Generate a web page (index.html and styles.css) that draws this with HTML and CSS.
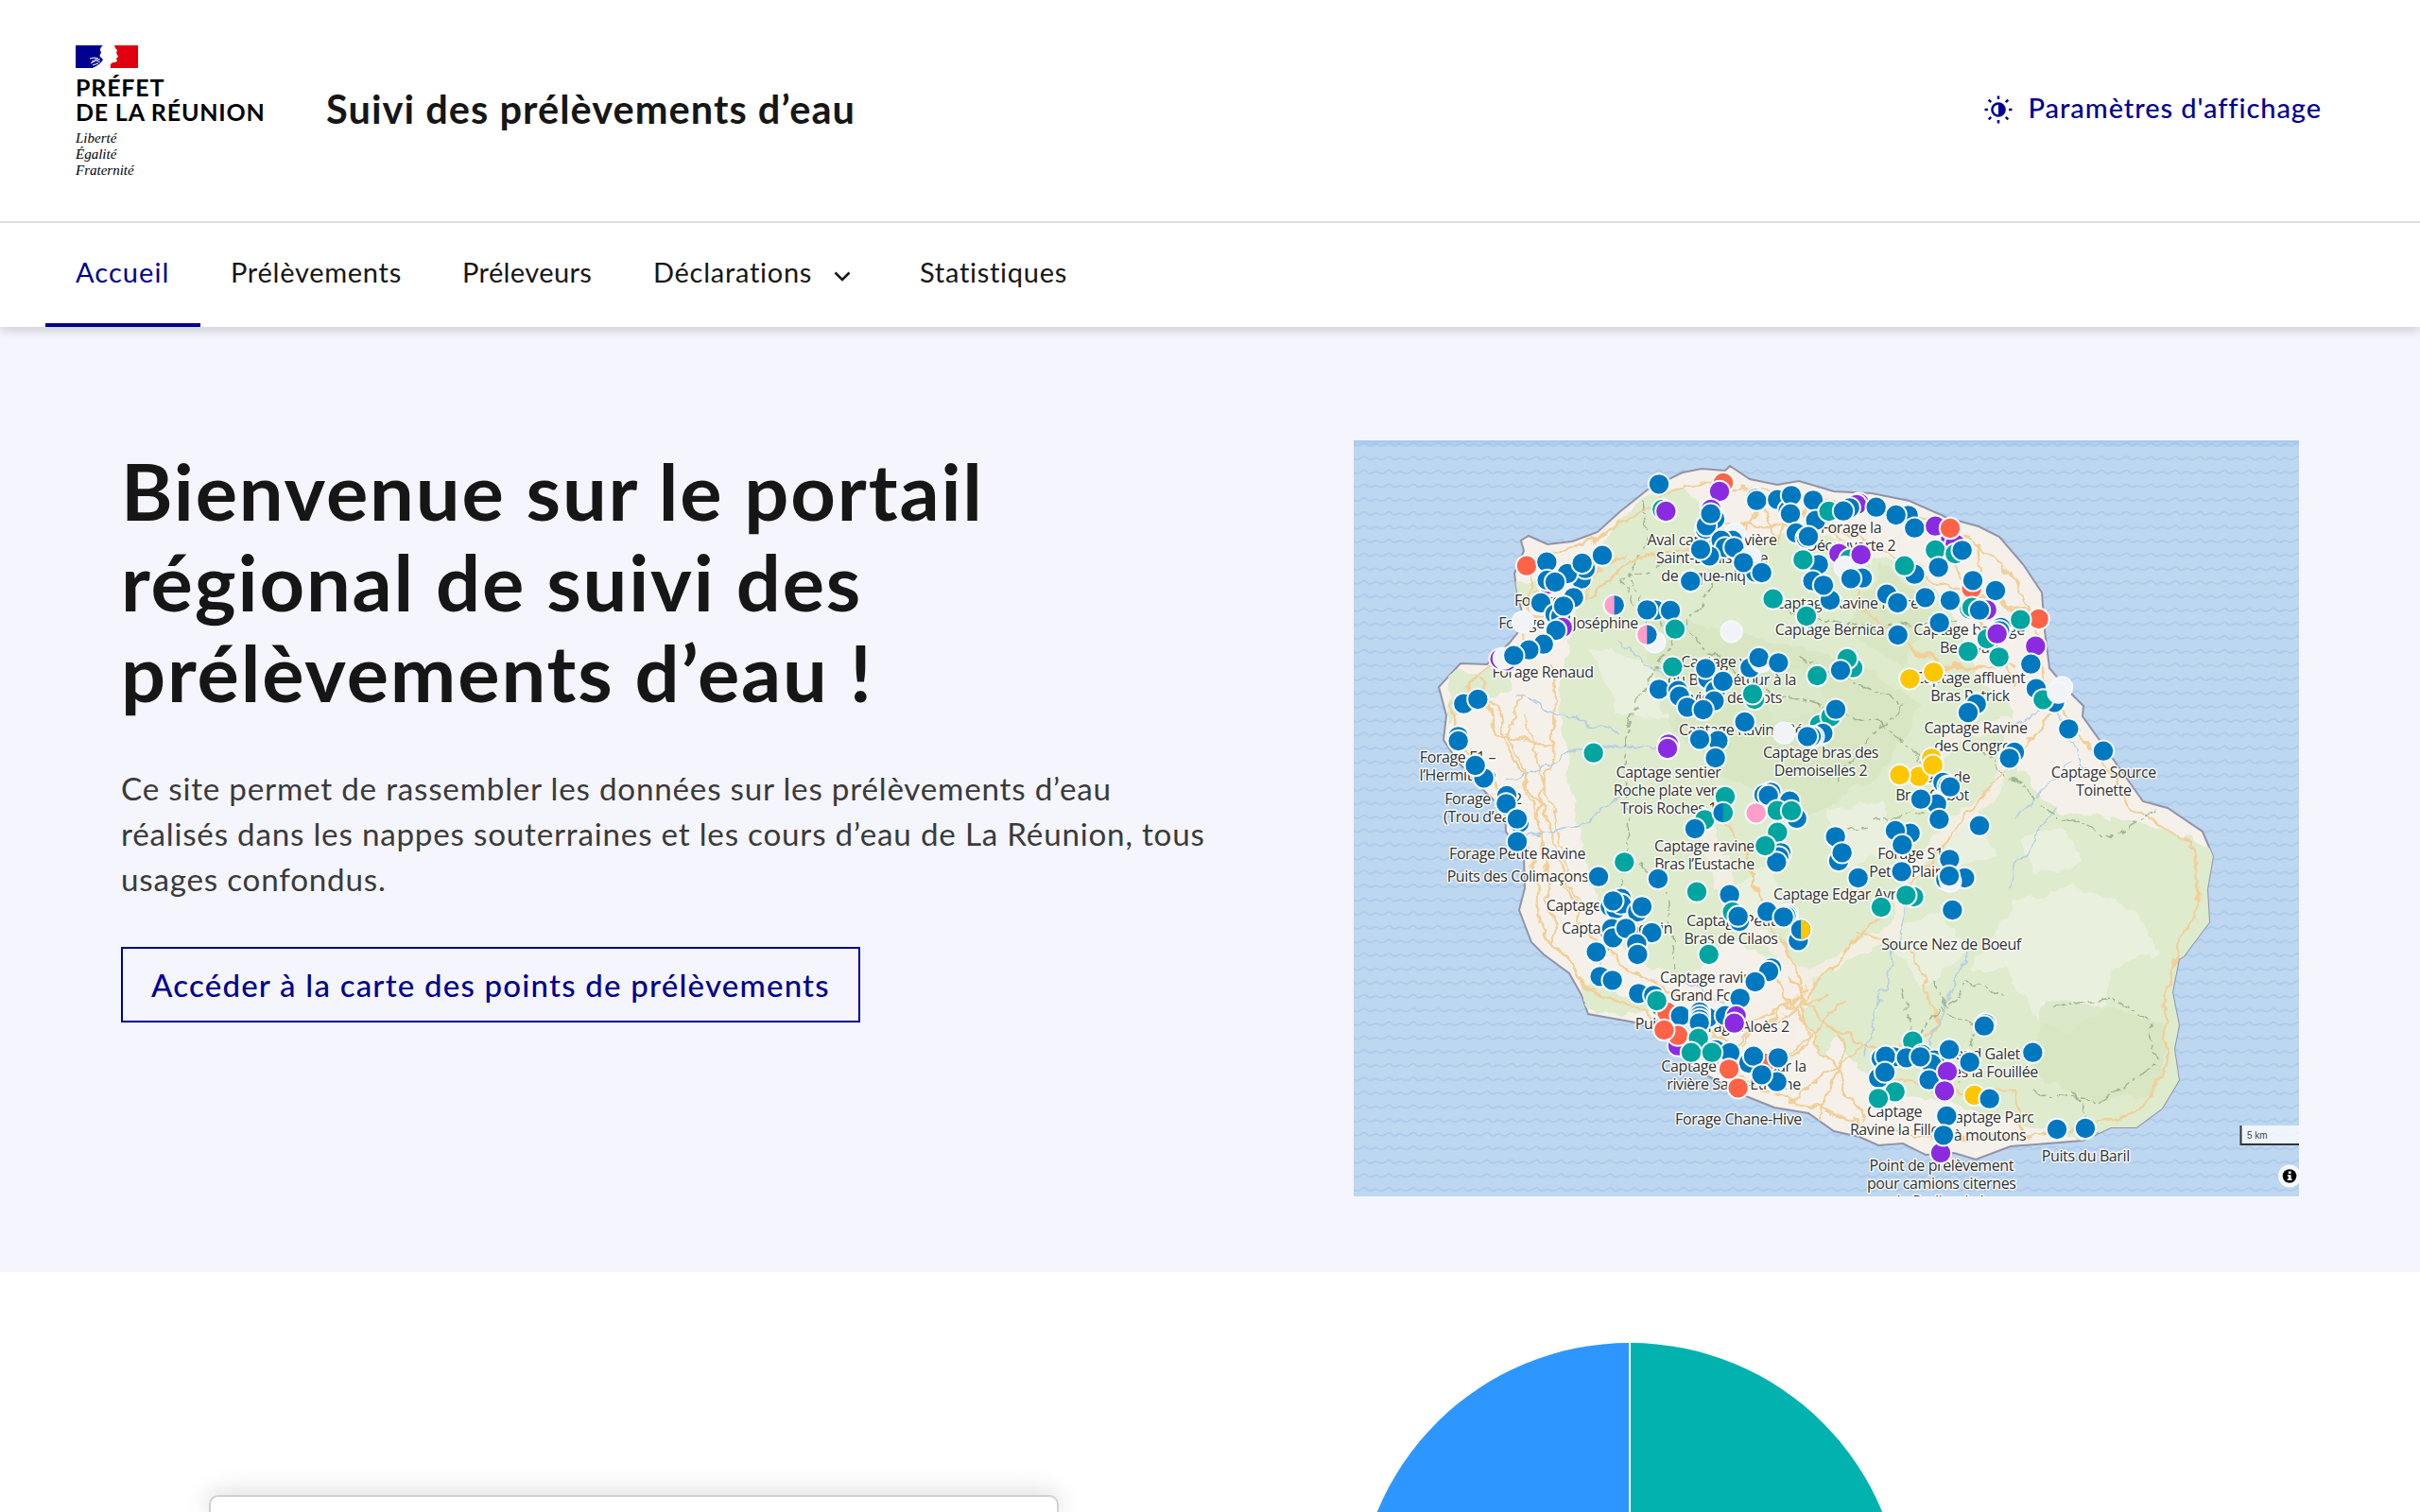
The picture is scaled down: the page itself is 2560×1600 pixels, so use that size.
FILE: index.html
```html
<!DOCTYPE html>
<html lang="fr">
<head>
<meta charset="utf-8">
<title>Suivi des prélèvements d’eau</title>
<link rel="stylesheet" href="styles.css">
</head>
<body>
<header class="header">
  <div class="header-top">
    <div class="logo">
      <svg class="flag" viewBox="0 0 66 24">
        <rect width="66" height="24" fill="#fff"/>
        <path d="M0 0H29C27 1 26 3 26 5L27 8C25 10 25 12 27 13L29 15L27 18C24 21 21 22 18 24H0Z" fill="#000091"/>
        <path d="M41 0H66V24H37C36 20 38 18 41 18L44 17L43 14L45 12L43 8L44 5L42 3Z" fill="#e1000f"/>
        <path d="M15 14L20 13L24 14M17 17L22 16L26 18M16 19L20 17M18 21L24 19M20 15L26 15" fill="none" stroke="#fff" stroke-width="1"/>
      </svg>
      <div class="logo-name">PRÉFET<br>DE LA RÉUNION</div>
      <div class="logo-motto">Liberté<br>Égalité<br>Fraternité</div>
    </div>
    <div class="site-title">Suivi des prélèvements d’eau</div>
    <a class="display-link">
      <svg class="display-icon" viewBox="0 0 30 30" fill="none" stroke="#000091">
        <circle cx="15" cy="15" r="6.6" stroke-width="2.5"/>
        <path d="M15 8.5a6.5 6.5 0 0 1 0 13Z" fill="#000091" stroke="none"/>
        <path d="M15 .5V4M15 26V29.500M.5 15H4M26 15H29.500M4.700 4.700L7.200 7.200M22.800 22.800L25.300 25.300M4.700 25.300L7.200 22.800M22.800 7.200L25.300 4.700" stroke-width="2.500"/>
      </svg>
      <span>Paramètres d'affichage</span>
    </a>
  </div>
  <nav class="nav">
    <a class="nav-item active">Accueil</a>
    <a class="nav-item">Prélèvements</a>
    <a class="nav-item tight">Préleveurs</a>
    <a class="nav-item">Déclarations
      <svg class="chevron" viewBox="0 0 18 11"><path d="M1.500 1.500L9 9L16.500 1.500" fill="none" stroke="#161616" stroke-width="2.600"/></svg>
    </a>
    <a class="nav-item">Statistiques</a>
  </nav>
</header>
<main>
  <section class="hero">
    <div class="intro">
      <h1>Bienvenue sur le portail régional de suivi des prélèvements d’eau !</h1>
      <p>Ce site permet de rassembler les données sur les prélèvements d’eau réalisés dans les nappes souterraines et les cours d’eau de La Réunion, tous usages confondus.</p>
      <a class="button">Accéder à la carte des points de prélèvements</a>
    </div>
    <svg class="map" viewBox="0 0 1000 800">
      <defs>
        <pattern id="waves" width="26" height="14.600" patternUnits="userSpaceOnUse">
          <rect width="26" height="14.600" fill="#bdd7f1"/>
          <path d="M0 5Q4 7 8 4T14 4T20 5T26 5" fill="none" stroke="#abcae9" stroke-width="1.700"/>
        </pattern>
        <filter id="rough" x="0" y="0" width="1000" height="800" filterUnits="userSpaceOnUse">
          <feTurbulence type="fractalNoise" baseFrequency=".05" numOctaves="3" seed="4"/>
          <feDisplacementMap in="SourceGraphic" scale="16" xChannelSelector="R" yChannelSelector="G"/>
        </filter>
        <linearGradient id="edge" x2="0" y2="1"><stop stop-color="#9ec1e6" stop-opacity=".7"/><stop offset="1" stop-color="#9ec1e6" stop-opacity="0"/></linearGradient>
        <path id="island" d="M348 34L368 30L393 32L398 27L419 41L448 47L471 43L508 54L548 56L588 64L628 82L661 91L683 102L708 131L728 161L731 201L736 241L758 267L772 281L771 292L801 334L835 382L861 389L898 414L909 440L903 475L905 510L878 546L873 549L866 584L873 619L868 644L873 677L855 707L828 727L801 727L771 741L735 744L695 747L658 761L635 754L605 756L581 744L555 746L535 737L508 731L481 712L445 706L415 694L381 676L355 661L328 627L298 616L248 607L241 587L228 564L201 544L188 531L175 497L181 474L180 441L161 414L160 391L141 374L111 341L95 317L98 291L90 261L113 236L141 237L165 214L181 194L173 161L170 141L180 117L177 106L185 101L205 110L231 107L258 97L281 76L311 52Z"/>
        <clipPath id="land"><use href="#island"/></clipPath>
      </defs>
      <rect width="1000" height="800" fill="url(#waves)"/>
      <rect width="1000" height="8" fill="url(#edge)"/>
      <use href="#island" fill="#f5f1ea" stroke="#9293a8" stroke-width="2"/>
      <g clip-path="url(#land)">
        <g filter="url(#rough)">
          <path d="M250 130L300 60L350 45L370 80L420 110L480 90L540 125L600 130L640 200L660 250L700 290L705 350L740 390L800 400L860 410L930 440L920 520L880 560L890 700L860 750L800 750L700 720L620 700L560 690L500 620L470 560L400 530L350 570L320 560L280 530L250 460L235 400L225 320L215 270L230 200Z" fill="#deebcd"/>
          <path d="M100 245L140 245L170 225L165 260L130 280L100 300ZM240 570L290 590L330 600L290 610L245 600ZM170 148L200 150L195 175L175 172ZM490 530L530 560L520 620L500 650L470 600ZM340 610L380 600L385 650L350 645Z" fill="#deebcd"/>
          <path d="M650 560L700 490L760 470L830 500L850 540L800 560L790 610L750 625L710 600L690 560ZM420 260L470 240L500 280L450 300ZM250 220L330 240L340 300L280 290ZM560 520L620 500L650 540L600 580ZM500 390L560 380L570 440L510 450ZM700 420L750 410L770 450L720 460ZM620 400L660 390L680 440L640 450ZM400 470L440 450L460 500L420 520Z" fill="#eaf0de"/>
          <path d="M300 180L390 200L520 230L600 280L560 350L480 400L400 360L330 300ZM560 130L610 180L580 240L520 200ZM730 590L800 600L860 620L850 690L780 700L720 670Z" fill="#d4e4be" opacity=".65"/>
          <path d="M390 440L400 500L440 530L480 580L450 650M370 400L390 470M600 350L640 310L700 300L680 370L600 440L570 520L490 560L430 600L340 640" fill="none" stroke="#f6efe6" stroke-width="14" opacity=".8"/>
          <g fill="none" stroke="#f2cf98" stroke-width="2.600">
            <path d="M350 44L420 52L500 66L590 78L650 105L700 145L722 200L730 260L770 310L820 385L885 425L895 480L870 540L858 590L860 660L835 705L770 730L690 738L610 738L530 722L470 700L400 672L350 630L300 600L255 590L230 555L195 510L190 440L165 380L115 325L102 280L130 250L180 215L185 170L190 125L250 108L300 78Z"/>
            <path d="M120 260L150 280L170 340L200 390L220 450L240 510L290 560L350 590M210 240L212 320L195 390L205 470L215 540L260 590M135 250L150 310L210 325M180 190L230 180L290 130L360 110L420 90L500 90L560 115L620 150L700 180M350 610L400 640L470 600L520 540L600 460L670 370L740 290M500 70L540 180L620 240L700 240M500 620L560 650L620 620L590 540L530 520M560 670L620 690L700 690L710 740M420 680L480 640L470 560L440 510L415 440L390 390M490 720L520 640L460 570M270 120L240 170L205 210M380 60L410 110L430 60L450 110L470 60L490 100M660 110L665 165L725 185M620 90L655 180L700 260M350 660L420 610L500 590M440 560L500 650L540 720"/>
            <path d="M410 640L480 580M430 680L520 590M460 700L540 640M190 160L290 120M180 290L240 500M175 270L165 310L195 400" stroke-width="2"/>
          </g>
          <path d="M170 270L280 310M160 360L260 320L340 330M180 420L240 410L290 370M330 560L400 600M700 300L740 280L780 360M700 400L760 340M690 470L740 390M540 650L590 480M280 210L350 270M610 640L650 540" fill="none" stroke="#b4cde4" stroke-width="1.500"/>
          <path d="M306 60L310 100L290 150L340 210L300 270L288 330L290 440L330 470L340 560M290 440L260 560M380 150L350 200L420 260L560 300L620 360M460 180L550 200L640 190M470 230L580 280L510 360M330 130L280 150L320 210M640 310L690 350L730 390L800 420L850 390M580 580L590 640L620 600L660 620L640 680M610 570L630 600L650 570L690 590M740 600L800 590L840 610L850 660L790 700L720 690M760 690L790 740M500 420L560 400L620 390" fill="none" stroke="#9db38c" stroke-width="1.500" stroke-dasharray="12 4 4 4"/>
        </g>
      </g>
      <g class="labels" id="labels"></g>
      <g class="points" id="points"></g>
      <g class="scale">
        <rect x="938.500" y="725" width="62" height="20" fill="#fff" fill-opacity=".75"/>
        <path d="M938.500 725V745H1000" fill="none" stroke="#333" stroke-width="2"/>
        <text x="945" y="738.500">5 km</text>
      </g>
      <circle cx="990" cy="778.500" r="12" fill="#fff" fill-opacity=".85"/>
      <circle cx="990" cy="778.500" r="7.300" fill="#000"/>
      <path d="M988.800 773.500h2.800v2.500h-2.800zM987.800 777.200h3.800v4.300h1v1.600h-5v-1.600h1.200v-2.700h-1z" fill="#fff"/>
    </svg>
  </section>
  <section class="stats">
    <div class="card"></div>
    <svg class="pie" viewBox="0 0 578 179">
      <path d="M289 0A289 289 0 0 0 289 578Z" fill="#2e96ff"/>
      <path d="M289 0A289 289 0 0 1 289 578Z" fill="#02b2af"/>
      <path d="M289 0V289" stroke="#fff" stroke-width="2"/>
    </svg>
  </section>
</main>
<script src="map.js"></script>
</body>
</html>
```
FILE: styles.css
```css
* { box-sizing: border-box; }
body {
  margin: 0;
  background: #fff;
  color: #161616;
  font-family: Lato, "Open Sans", sans-serif;
}
.header {
  position: relative;
  height: 346px;
  background: #fff;
  box-shadow: 0 4px 10px rgba(0, 0, 18, .16);
}
.header-top {
  display: flex;
  height: 236px;
  padding: 48px 104px 0 80px;
  border-bottom: 2px solid #ddd;
}
.logo { width: 265px; }
.flag { display: block; width: 66px; height: 24px; }
.logo-name {
  margin-top: 8px;
  color: #000;
  font-size: 25px;
  font-weight: 700;
  line-height: 25.800px;
  letter-spacing: .8px;
  white-space: nowrap;
}
.logo-motto {
  margin-top: 6px;
  color: #000;
  font: italic 15px/17px "Liberation Serif", serif;
}
.site-title {
  margin-top: 39px;
  font-size: 41.500px;
  font-weight: 700;
  line-height: 56px;
  letter-spacing: 1.050px;
  white-space: nowrap;
}
.display-link {
  display: flex;
  gap: 17px;
  height: 48px;
  margin: 44px 0 0 auto;
  color: #000091;
  font-size: 29px;
  font-weight: 500;
  line-height: 44px;
  letter-spacing: .930px;
  white-space: nowrap;
}
.display-icon { width: 30px; height: 30px; margin-top: 9px; }
.nav {
  display: grid;
  grid-template-columns: 164px 245px 202px 282px 222px;
  height: 110px;
  padding-left: 48px;
}
.nav-item {
  padding: 28px 0 0 32px;
  font-size: 29px;
  line-height: 48px;
  letter-spacing: .730px;
  white-space: nowrap;
}
.nav-item.tight { letter-spacing: .4px; }
.nav-item.active { border-bottom: 4px solid #000091; color: #000091; letter-spacing: 1.050px; }
.chevron { width: 18px; height: 11px; margin-left: 15px; vertical-align: 1px; }
.hero {
  display: grid;
  grid-template-columns: 1160px 1000px;
  justify-content: space-between;
  height: 1000px;
  padding: 120px 128px 80px;
  background: #f5f5fe;
}
h1 {
  margin: 5px 0 51px;
  font-size: 83px;
  font-weight: 700;
  line-height: 96px;
  letter-spacing: 1.850px;
  width: 1040px;
}
.intro p {
  margin: 0 0 48px;
  color: #3a3a3a;
  font-size: 33.200px;
  line-height: 48px;
  letter-spacing: .790px;
}
.button {
  display: inline-block;
  height: 80px;
  padding: 14px 30px;
  border: 2px solid #000091;
  color: #000091;
  font-size: 33px;
  font-weight: 500;
  line-height: 48px;
  letter-spacing: 1.220px;
  white-space: nowrap;
}
.map { display: block; width: 1000px; height: 800px; }
.labels {
  fill: #333;
  stroke: #fff;
  stroke-width: 3px;
  stroke-linejoin: round;
  stroke-opacity: .85;
  paint-order: stroke;
  font: 16px "Open Sans", "Noto Sans", sans-serif;
  letter-spacing: -.4px;
}
.points { stroke: #f3f8fc; stroke-width: 2px; }
.scale text { fill: #444; font: 10px "Liberation Sans", sans-serif; }
.stats {
  display: grid;
  grid-template-columns: 899px 578px;
  column-gap: 315px;
  height: 254px;
  padding: 75px 221px 0;
  overflow: hidden;
}
.card {
  height: 18px;
  margin-top: 161px;
  border: 2px solid #d0d0d0;
  border-bottom: 0;
  border-radius: 10px 10px 0 0;
  background: #fff;
  box-shadow: 0 0 28px rgba(0, 0, 0, .2);
}
.pie { display: block; width: 578px; height: 179px; }
```
FILE: map.js
```js
const NS = 'http://www.w3.org/2000/svg';
const COLORS = { b: '#0078bf', t: '#00a5a0', p: '#8a2be2', o: '#ff6347', y: '#fdc700', w: '#f2f3f7', k: '#ff9ec8' };

function add(parent, tag, attrs, text) {
  const el = document.createElementNS(NS, tag);
  for (const k in attrs) el.setAttribute(k, attrs[k]);
  if (text) el.textContent = text;
  parent.append(el);
  return el;
}

// [anchor, x, first baseline, lines...]
const LABELS = [
  ['middle', 200, 250.7, 'Forage Renaud'],
  ['start', 170, 175, 'Forage'],
  ['middle', 227, 199, 'Forage Ste Joséphine'],
  ['middle', 379, 110.7, 'Aval captage rivière', 'Saint-Denis zone', 'de pique-nique'],
  ['middle', 526, 97.7, 'Forage la', 'Découverte 2'],
  ['middle', 521.5, 178, 'Captage Ravine Noire'],
  ['middle', 503.5, 206, 'Captage Bernica'],
  ['middle', 651, 206, 'Captage barrage', 'Beauvan'],
  ['middle', 400, 240, 'Captage vers le', 'du Bras Détour à la', 'rivière des cots'],
  ['middle', 652, 256.7, 'Captage affluent', 'Bras Patrick'],
  ['middle', 658, 309.7, 'Captage Ravine', 'des Congres'],
  ['middle', 793.3, 356.5, 'Captage Source', 'Toinette'],
  ['middle', 110, 340.7, 'Forage F1 –', 'l’Hermitage'],
  ['middle', 137, 384.7, 'Forage F5 2', '(Trou d’eau)'],
  ['middle', 173, 443.3, 'Forage Petite Ravine'],
  ['middle', 173.5, 467.3, 'Puits des Colimaçons'],
  ['start', 203.7, 498, 'Captage'],
  ['start', 220, 522.3, 'Captage Chemin'],
  ['middle', 333, 357, 'Captage sentier', 'Roche plate vers', 'Trois Roches 1'],
  ['start', 344, 311.7, 'Captage Ravine Bémal'],
  ['middle', 494, 335.7, 'Captage bras des', 'Demoiselles 2'],
  ['middle', 371, 435.3, 'Captage ravine', 'Bras l’Eustache'],
  ['middle', 612, 361.7, 'Captage de', 'Bras Cabot'],
  ['middle', 589, 443, 'Forage S1', 'Petite Plaine'],
  ['start', 444, 486, 'Captage Edgar Avril'],
  ['middle', 399, 513.7, 'Captage Petit', 'Bras de Cilaos'],
  ['middle', 632, 538.7, 'Source Nez de Boeuf'],
  ['middle', 377, 574, 'Captage ravine', 'Grand Fond'],
  ['start', 297.7, 623, 'Puits'],
  ['end', 460.7, 625.7, 'Forage Aloès 2'],
  ['middle', 402, 668.3, 'Captage mobile sur la', 'rivière Saint-Étienne'],
  ['middle', 407, 724.3, 'Forage Chane-Hive'],
  ['middle', 662, 655.3, 'Grand Galet', 'Chutes la Fouillée'],
  ['middle', 572, 716.3, 'Captage', 'Ravine la Fille'],
  ['middle', 673, 722.3, 'Captage Parc', 'à moutons'],
  ['middle', 774.3, 763, 'Puits du Baril'],
  ['middle', 621.7, 772.5, 'Point de prélèvement', 'pour camions citernes', 'du Radier de la'],
];

// Sectors drawn at three units per map pixel: [origin x, origin y, points]
const SECTORS = [
  [-2, -6, 't985,237 p997,243 b975,157 o555,416 b619,404 p625,474 b620,462 b728,458 b741,425 b684,441 b731,408 b795,383 b645,468 b704,517 b600,534 b645,570 b663,577 b672,544 p668,612 b648,621 w543,594 b608,665 b562,683 p470,712 p492,718 w483,710 b514,701 kb833,541 b964,557 b1011,558 b937,556 w961,658 kb937,635 t1026,617 t1018,737 b975,808 b1035,812'],
  [348, -6, 'o129,153 p117,180 b232,202 b235,209 b301,206 b335,240 b345,193 b342,251 b414,208 b422,272 t464,243 p560,217 p552,222 b530,232 b510,242 b614,230 b716,256 b677,255 b736,296 p802,290 p850,335 p865,347 o849,297 t802,366 t865,378 b887,367 p90,237 b102,268 b72,300 b75,289 b89,251 w165,315 b158,335 b122,335 b135,358 b85,385 b163,358 b57,364 w215,390 b232,437 b193,406 b251,438 b25,465 b360,312 b392,328 b399,323 p496,377 t530,395 w515,420 p566,381 b431,412 t382,397 b413,464 b468,525 b447,478 b570,455 b534,457 b736,443 t704,416 b812,421 o917,488 b921,463 b993,495 t287,521 b648,506 b682,534 b770,517 b849,526 t393,576 w155,625 b683,636 b815,597 t910,553 t918,548 p965,556 b942,557 b1010,612 b1006,622 t966,648 p998,632 t906,688 t1004,706 b214,740 w250,720 b242,708 b304,724 t540,740 t522,711 b501,748 t427,765 y721,775 y796,754 b80,775 b73,742 b104,813 b128,783 b-10,830 t228,840 t222,823'],
  [668, -6, 'o170,585 t112,587 p160,671 b145,728 b162,806 b220,850 t184,841 w243,802 w232,818 b265,934 b375,1004 b93,1008 b77,1027'],
  [-2, 274, 'b355,14 b400,0 b338,118 b338,132 b419,250 b392,210 b492,306 b490,331 b531,392 b525,380 b525,452 t767,170 p1005,142 p1002,156 b783,563 t865,517 b972,570 b855,632 b820,658 b838,665 b855,650 b829,640 b907,675 b921,658 b825,728 b829,757 b870,727 b952,741 b907,812 b904,776 b776,802'],
  [348, 274, 'b15,25 b100,5 b65,33 b197,72 b112,131 b54,127 b104,186 w322,107 t435,80 t470,55 b486,32 b445,108 b415,118 b408,118 b396,118 b932,15 b906,42 y790,187 y750,245 y689,240 y794,209 b826,264 b842,275 b849,278 b806,332 b756,317 b814,381 b942,401 t135,309 t70,382 bt128,360 b39,411 b280,295 b258,303 b272,305 b340,323 t300,353 b362,378 t345,354 k233,361 t301,422 b312,487 b305,500 b298,517 t262,465 b485,436 b495,513 b506,487 b557,567 b722,425 b675,417 b697,462 b695,547 b847,508 b835,572 b895,567 w850,578 b846,561 t733,627 t709,622 t630,660 b856,669 t45,611 b149,620 t158,675 b180,705 b176,689 b268,674 b333,684 b328,688 b320,691 b367,766 by375,731 t83,810'],
  [168, 544, 'b397,0 b278,70 b317,82 b822,43 b813,54 b770,87 b722,139 b400,124 b448,130 t470,165 o490,183 t458,147 b533,195 b620,200 b594,183 b594,195 b594,206 b593,217 b675,194 p710,195 p704,218 p525,290 o525,257 o481,240 t590,266 b645,303 b690,312 t567,311 t633,311 b750,345 o800,345 b843,328 b765,323 b839,404 b791,382 o687,364 o716,424'],
  [488, 544, 't310,275 b541,220 b537,227 b210,330 b250,325 b224,323 b290,328 b340,318 b380,335 b370,348 b334,325 b426,302 b202,392 b222,374 b362,398 b491,342 b691,311 p420,372 p411,433 y506,447 b554,458 t254,436 t201,457 b418,513 p399,630 b408,574 b768,555 b858,552'],
];

const labels = document.getElementById('labels');
for (const [anchor, x, y, ...lines] of LABELS) {
  lines.forEach((line, i) => add(labels, 'text', { x, y: y + i * 19.1, 'text-anchor': anchor }, line));
}

const points = document.getElementById('points');
for (const [ox, oy, list] of SECTORS) {
  for (const item of list.split(' ')) {
    const [, kind, px, py] = item.match(/^([a-z]+)(-?\d+),(-?\d+)$/);
    const cx = ox + px / 3;
    const cy = oy + py / 3;
    add(points, 'circle', { cx, cy, r: 11.2, fill: COLORS[kind[0]] });
    if (kind[1]) {
      add(points, 'path', { d: `M${cx} ${cy - 10.2}a10.2 10.2 0 0 1 0 20.4Z`, fill: COLORS[kind[1]], stroke: 'none' });
    }
  }
}
```
